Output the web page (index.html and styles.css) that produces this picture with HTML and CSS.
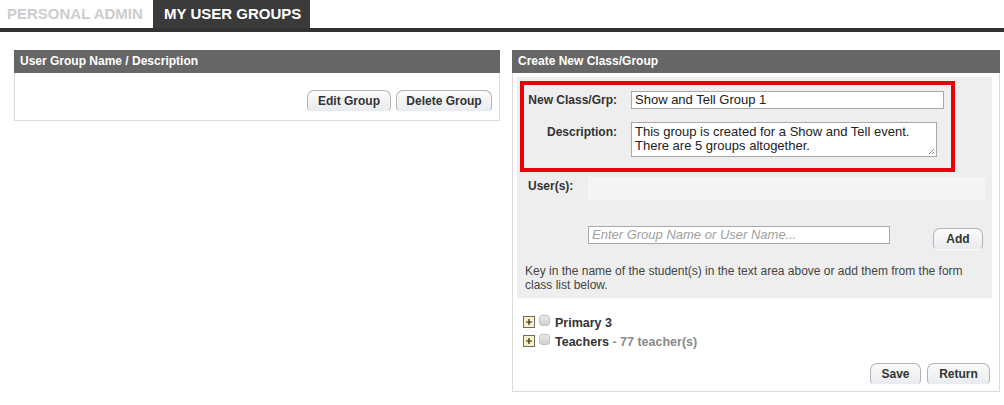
FILE: index.html
```html
<!DOCTYPE html>
<html>
<head>
<meta charset="utf-8">
<link rel="stylesheet" href="styles.css">
</head>
<body>
<div class="tabs">
  <div class="tab">PERSONAL ADMIN</div>
  <div class="tab active">MY USER GROUPS</div>
</div>
<div class="main">
  <div class="panel left">
    <div class="phead">User Group Name / Description</div>
    <div class="lbody">
      <button class="btn edit">Edit Group</button>
      <button class="btn del">Delete Group</button>
    </div>
  </div>
  <div class="panel right">
    <div class="phead">Create New Class/Group</div>
    <div class="rbody">
      <div class="greybox">
        <div class="redbox">
          <div class="lbl lbl1">New Class/Grp:</div>
          <div class="inp name">Show and Tell Group 1</div>
          <div class="lbl lbl2">Description:</div>
          <div class="ta">This group is created for a Show and Tell event.<br>There are 5 groups altogether.<svg class="grip" width="7" height="7" viewBox="0 0 7 7"><path d="M6 1 L1 6 M6 4 L4 6" stroke="#888" stroke-width="1"/></svg></div>
        </div>
        <div class="users">
          <div class="ulbl">User(s):</div>
          <div class="ubox"></div>
        </div>
        <div class="addrow">
          <div class="inp search">Enter Group Name or User Name...</div>
          <button class="btn add">Add</button>
        </div>
        <p class="hint">Key in the name of the student(s) in the text area above or add them from the form class list below.</p>
      </div>
      <div class="tree">
        <div class="trow">
          <svg class="plus" width="12" height="12" viewBox="0 0 12 12"><rect x="0.5" y="0.5" width="11" height="11" fill="#fcefc4" stroke="#6b6b6b"/><path d="M3 6 H9 M6 3 V9" stroke="#222" stroke-width="1.2"/></svg>
          <span class="cb"></span>
          <span class="tname">Primary 3</span>
        </div>
        <div class="trow">
          <svg class="plus" width="12" height="12" viewBox="0 0 12 12"><rect x="0.5" y="0.5" width="11" height="11" fill="#fcefc4" stroke="#6b6b6b"/><path d="M3 6 H9 M6 3 V9" stroke="#222" stroke-width="1.2"/></svg>
          <span class="cb"></span>
          <span class="tname">Teachers</span><span class="tcount">&nbsp;- 77 teacher(s)</span>
        </div>
      </div>
      <div class="actions">
        <button class="btn save">Save</button>
        <button class="btn ret">Return</button>
      </div>
    </div>
  </div>
</div>
</body>
</html>
```

FILE: styles.css
```css
* { box-sizing: border-box; }
body {
  margin: 0;
  font-family: "Liberation Sans", Arial, sans-serif;
  font-size: 12px;
  color: #333;
  background: #fff;
}
.tabs {
  display: flex;
  height: 32px;
  border-bottom: 4px solid #333;
}
.tab {
  height: 28px;
  line-height: 28px;
  font-size: 15px;
  font-weight: bold;
  color: #cdcdcd;
  padding: 0 0 0 7px;
  width: 153px;
}
.tab.active {
  width: 157px;
  background: #3a3a3a;
  color: #fff;
  padding: 0 0 0 11px;
}
.main {
  display: flex;
  gap: 12px;
  padding: 18px 0 0 14px;
  align-items: flex-start;
}
.panel {
  border: 1px solid #dcdcdc;
  border-top: none;
}
.left { width: 486px; }
.right { width: 488px; }
.phead {
  height: 23px;
  line-height: 23px;
  background: #666;
  color: #fff;
  font-weight: bold;
  font-size: 12px;
  padding-left: 6px;
  margin: 0 -1px;
}
.lbody {
  height: 47px;
  display: flex;
  justify-content: flex-end;
  align-items: flex-start;
  gap: 5px;
  padding: 17px 7px 0 0;
}
.btn {
  font-family: "Liberation Sans", Arial, sans-serif;
  font-size: 12px;
  font-weight: bold;
  color: #333;
  height: 22px;
  padding: 0;
  border: 1px solid #b4b4b4;
  border-bottom-color: transparent;
  border-radius: 7px 7px 5px 5px;
  background: linear-gradient(#fbfbfb, #e8ebef);
  cursor: pointer;
}
.edit { width: 84px; }
.del { width: 96px; }
.rbody {
  padding: 4px 7px 6px 4px;
}
.greybox {
  background: #eeeeee;
  padding: 4px 7px 6px 3px;
}
.redbox {
  width: 435px;
  border: 4px solid #e8000b;
  display: grid;
  grid-template-columns: 93px 1fr;
  column-gap: 14px;
  row-gap: 13px;
  padding: 6px 0 11px 0;
  align-items: start;
}
.lbl {
  font-weight: bold;
  text-align: right;
  color: #333;
  font-size: 12px;
}
.lbl1 { line-height: 18px; }
.lbl2 { padding-top: 3px; }
.inp {
  height: 18px;
  border: 1px solid #a9a9a9;
  background: #fff;
  font-size: 13px;
  line-height: 16px;
  padding: 0 3px;
  color: #222;
  white-space: nowrap;
}
.name { width: 313px; }
.ta {
  position: relative;
  width: 306px;
  height: 35px;
  border: 1px solid #a9a9a9;
  background: #fff;
  font-size: 13px;
  line-height: 14px;
  padding: 2px 3px;
  color: #222;
}
.grip { position: absolute; right: 1px; bottom: 1px; }
.users {
  display: flex;
  margin-top: 5px;
  padding-left: 8px;
}
.ulbl {
  width: 60px;
  font-weight: bold;
  padding-top: 2px;
}
.ubox {
  width: 397px;
  height: 23px;
  background: #f5f5f5;
}
.addrow {
  display: flex;
  align-items: flex-start;
  margin-top: 26px;
  padding-left: 68px;
}
.search {
  width: 302px;
  color: #a0a0a0;
  font-style: italic;
  font-size: 13px;
}
.add {
  margin-left: 43px;
  margin-top: 2px;
  width: 50px;
}
.hint {
  margin: 14px 0 0 5px;
  font-size: 12px;
  line-height: 14px;
  color: #444;
  width: 450px;
}
.tree {
  padding: 15px 0 0 6px;
}
.trow {
  display: flex;
  align-items: center;
  height: 19px;
}
.plus { margin-right: 4px; position: relative; top: -1px; }
.cb {
  width: 11px;
  height: 11px;
  border: 1px solid #c3c3c3;
  border-radius: 3px;
  background: linear-gradient(#e9e9e9, #cfcfcf);
  margin-right: 5px;
  position: relative;
  top: -2px;
}
.tname {
  font-weight: bold;
  font-size: 12.5px;
  color: #333;
}
.tcount {
  font-weight: bold;
  font-size: 12.5px;
  color: #8a8a8a;
}
.actions {
  display: flex;
  justify-content: flex-end;
  gap: 6px;
  margin-top: 12px;
  padding-right: 2px;
}
.save { width: 51px; }
.ret { width: 63px; }
```
